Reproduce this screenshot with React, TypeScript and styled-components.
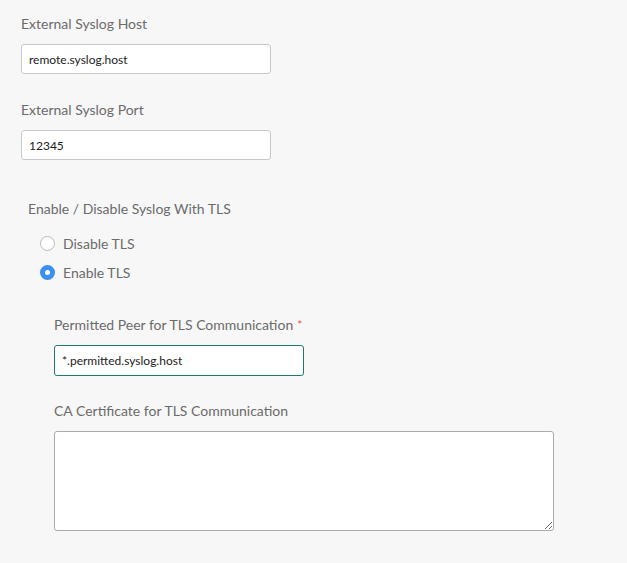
import React, { useState } from 'react';
import styled, { createGlobalStyle } from 'styled-components';

const GlobalStyle = createGlobalStyle`
    body {
        margin: 0;
        background: #f7f7f7;
        font-family: Lato, "Open Sans", sans-serif;
    }
`

const Page = styled.div`
    padding: 14px 0 30px 21px;
`

const Field = styled.div<{ $gap?: number }>`
    display: flex;
    flex-direction: column;
    align-items: flex-start;
    margin-top: ${p => p.$gap ?? 0}px;
`

const Label = styled.label`
    font-size: 14px;
    line-height: 20px;
    color: #6b6b6b;
    margin-bottom: 10px;
`

const Required = styled.span`
    color: #e8564e;
    font-size: 12px;
    margin-left: 4px;
    vertical-align: top;
`

const TextInput = styled.input<{ $focused?: boolean }>`
    box-sizing: border-box;
    width: 250px;
    height: ${p => (p.$focused ? 31 : 30)}px;
    padding: 0 7px;
    border: 1px solid ${p => (p.$focused ? '#1d7a70' : '#c9c9c9')};
    border-radius: 3px;
    background: #fff;
    font-family: Lato, "Open Sans", sans-serif;
    font-size: 12px;
    color: #222;
    outline: none;
`

const Group = styled.div`
    margin-top: 39px;
    padding-left: 7px;
`

const GroupTitle = styled.div`
    font-size: 14px;
    line-height: 20px;
    color: #6b6b6b;
`

const RadioList = styled.div`
    display: flex;
    flex-direction: column;
    gap: 9px;
    margin-top: 14px;
    padding-left: 12px;
`

const RadioRow = styled.label`
    display: flex;
    align-items: center;
    gap: 8px;
    height: 20px;
    font-size: 14px;
    color: #6b6b6b;
    cursor: pointer;
`

const RadioDot = styled.span<{ $checked: boolean }>`
    box-sizing: border-box;
    width: 15px;
    height: 15px;
    border-radius: 50%;
    background: #fff;
    border: ${p => (p.$checked ? '5px solid #3a8ff2' : '1px solid #b9b9b9')};
`

const Nested = styled.div`
    padding-left: 26px;
`

const TextArea = styled.textarea`
    box-sizing: border-box;
    width: 500px;
    height: 100px;
    border: 1px solid #ababab;
    border-radius: 3px;
    background: #fff;
    font-family: Lato, "Open Sans", sans-serif;
    font-size: 12px;
    outline: none;
    display: block;
`

function App() {
    const [tls, setTls] = useState(true);
    return (
        <Page>
            <GlobalStyle />
            <Field>
                <Label>External Syslog Host</Label>
                <TextInput defaultValue="remote.syslog.host" />
            </Field>
            <Field $gap={26}>
                <Label>External Syslog Port</Label>
                <TextInput defaultValue="12345" />
            </Field>

            <Group>
                <GroupTitle>Enable / Disable Syslog With TLS</GroupTitle>
                <RadioList>
                    <RadioRow onClick={() => setTls(false)}>
                        <RadioDot $checked={!tls} />
                        Disable TLS
                    </RadioRow>
                    <RadioRow onClick={() => setTls(true)}>
                        <RadioDot $checked={tls} />
                        Enable TLS
                    </RadioRow>
                </RadioList>
                {tls && (
                    <Nested>
                        <Field $gap={33}>
                            <Label>
                                Permitted Peer for TLS Communication<Required>*</Required>
                            </Label>
                            <TextInput $focused defaultValue="*.permitted.syslog.host" />
                        </Field>
                        <Field $gap={25}>
                            <Label>CA Certificate for TLS Communication</Label>
                            <TextArea />
                        </Field>
                    </Nested>
                )}
            </Group>
        </Page>
    );
}

export default App;
